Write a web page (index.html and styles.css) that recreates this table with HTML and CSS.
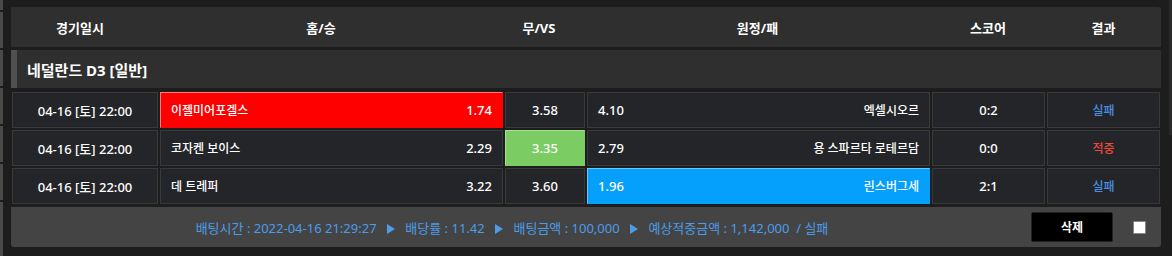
FILE: index.html
```html
<!DOCTYPE html>
<html lang="ko">
<head>
<meta charset="utf-8">
<title>배팅내역</title>
<link rel="stylesheet" href="styles.css">
</head>
<body>
<div class="page">
  <div class="edge-left"></div>
  <div class="panel">
    <div class="head">
      <div class="hc">경기일시</div>
      <div class="hc">홈/승</div>
      <div class="hc">무/VS</div>
      <div class="hc">원정/패</div>
      <div class="hc">스코어</div>
      <div class="hc">결과</div>
    </div>
    <div class="league"><span class="accent"></span><span class="league-name">네덜란드 D3 [일반]</span></div>
    <div class="rows">
      <div class="row">
        <div class="cell date">04-16 [토] 22:00</div>
        <div class="cell team home red"><span>이젤미어포겔스</span><span class="num">1.74</span></div>
        <div class="cell draw num">3.58</div>
        <div class="cell team away"><span class="num">4.10</span><span>엑셀시오르</span></div>
        <div class="cell score num">0:2</div>
        <div class="cell result lose">실패</div>
      </div>
      <div class="row">
        <div class="cell date">04-16 [토] 22:00</div>
        <div class="cell team home"><span>코자켄 보이스</span><span class="num">2.29</span></div>
        <div class="cell draw num green">3.35</div>
        <div class="cell team away"><span class="num">2.79</span><span>용 스파르타 로테르담</span></div>
        <div class="cell score num">0:0</div>
        <div class="cell result win">적중</div>
      </div>
      <div class="row">
        <div class="cell date">04-16 [토] 22:00</div>
        <div class="cell team home"><span>데 트레퍼</span><span class="num">3.22</span></div>
        <div class="cell draw num">3.60</div>
        <div class="cell team away blue"><span class="num">1.96</span><span>린스버그세</span></div>
        <div class="cell score num">2:1</div>
        <div class="cell result lose">실패</div>
      </div>
    </div>
    <div class="foot">
      <div class="summary">배팅시간 : 2022-04-16 21:29:27 <span class="tri"></span> 배당률 : 11.42 <span class="tri"></span> 배팅금액 : 100,000 <span class="tri"></span> 예상적중금액 : 1,142,000 &nbsp;/ 실패</div>
      <button class="del">삭제</button>
      <span class="check"></span>
    </div>
  </div>
  <div class="edge-right"></div>
</div>
</body>
</html>
```
FILE: styles.css
```css
* { box-sizing: border-box; }
html, body {
  margin: 0;
  padding: 0;
  background: #1d1d1d;
  font-family: "Noto Sans", "Noto Sans CJK KR", sans-serif;
  color: #fff;
}
.page {
  display: flex;
  align-items: flex-start;
  width: 1172px;
  height: 256px;
}
.edge-left {
  width: 3px;
  height: 256px;
  flex: none;
  background: repeating-linear-gradient(to bottom, #4a4a4a 0 36px, #1d1d1d 36px 38px);
  background-position: 0 -26px;
}
.edge-right {
  width: 3px;
  height: 135px;
  flex: none;
  margin-left: 8px;
  background: #2a2a2a;
}
.panel {
  width: 1150px;
  margin: 7px 0 0 8px;
  display: flex;
  flex-direction: column;
}
.head {
  height: 40px;
  background: #2f2f2f;
  border-radius: 0 3px 0 0;
  display: grid;
  grid-template-columns: 138px 344px 92px 345px 116px 115px;
  align-items: center;
  font-size: 13px;
  font-weight: 700;
}
.hc { text-align: center; }
.league {
  margin-top: 3px;
  height: 38px;
  background: #2f2f2f;
  display: flex;
  align-items: center;
  font-size: 15px;
  font-weight: 700;
}
.accent {
  width: 6px;
  height: 100%;
  background: #505050;
}
.league-name { margin-left: 10px; }
.rows {
  margin: 4px 1px 0 1px;
  display: flex;
  flex-direction: column;
  gap: 2px;
}
.row {
  display: grid;
  grid-template-columns: 146px 343px 80px 343px 113px 113px;
  gap: 2px;
  height: 36px;
}
.cell {
  background: #242528;
  border: 1px solid #38393b;
  display: flex;
  align-items: center;
  justify-content: center;
  font-size: 12px;
  font-weight: 500;
}
.date { font-size: 13px; }
.num { font-size: 13px; }
.team {
  justify-content: space-between;
  padding: 0 10px 0 10px;
}
.red { background: #ff0000; border-color: #ff7a7a #ff0000 #ff0000 #ff7a7a; }
.blue { background: #05a0fb; border-color: #6ec6ff #05a0fb #05a0fb #6ec6ff; }
.green { background: #7bcc63; border-color: #a6e090 #7bcc63 #7bcc63 #a6e090; }
.lose { color: #4a90e2; }
.win { color: #f0483c; }
.foot {
  margin-top: 3px;
  height: 40px;
  background: #444444;
  border-radius: 0 0 3px 3px;
  display: flex;
  align-items: center;
}
.summary {
  width: 1002px;
  text-align: center;
  color: #4b9ce9;
  font-size: 13px;
  white-space: nowrap;
}
.tri {
  display: inline-block;
  width: 0;
  height: 0;
  border-left: 8px solid #4b9ce9;
  border-top: 5px solid transparent;
  border-bottom: 5px solid transparent;
  margin: 0 7px;
  vertical-align: -1px;
}
.del {
  margin-left: 18px;
  width: 82px;
  height: 30px;
  background: #000;
  color: #fff;
  border: 1px solid #222;
  border-radius: 2px;
  font-family: inherit;
  font-size: 12px;
  font-weight: 700;
  padding: 0;
}
.check {
  margin-left: 20px;
  width: 13px;
  height: 13px;
  background: #fff;
  border: 1px solid #888;
  border-radius: 1px;
}
```
